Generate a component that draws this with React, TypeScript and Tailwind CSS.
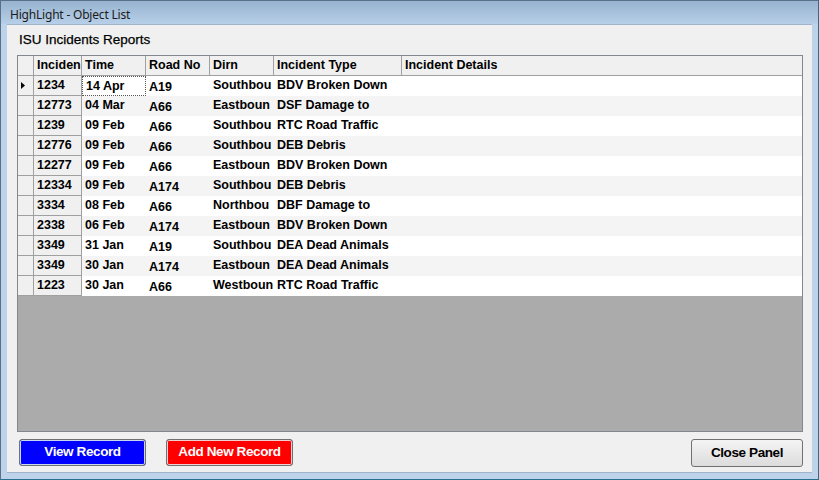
type Row = {
  id: string;
  time: string;
  road: string;
  dirn: string;
  type: string;
};

// column text as the grid shows it (narrow columns clip the longer values)
const ROWS: Row[] = [
  { id: "1234", time: "14 Apr", road: "A19", dirn: "Southbou", type: "BDV Broken Down" },
  { id: "12773", time: "04 Mar", road: "A66", dirn: "Eastboun", type: "DSF Damage to" },
  { id: "1239", time: "09 Feb", road: "A66", dirn: "Southbou", type: "RTC Road Traffic" },
  { id: "12776", time: "09 Feb", road: "A66", dirn: "Southbou", type: "DEB Debris" },
  { id: "12277", time: "09 Feb", road: "A66", dirn: "Eastboun", type: "BDV Broken Down" },
  { id: "12334", time: "09 Feb", road: "A174", dirn: "Southbou", type: "DEB Debris" },
  { id: "3334", time: "08 Feb", road: "A66", dirn: "Northbou", type: "DBF Damage to" },
  { id: "2338", time: "06 Feb", road: "A174", dirn: "Eastboun", type: "BDV Broken Down" },
  { id: "3349", time: "31 Jan", road: "A19", dirn: "Southbou", type: "DEA Dead Animals" },
  { id: "3349", time: "30 Jan", road: "A174", dirn: "Eastboun", type: "DEA Dead Animals" },
  { id: "1223", time: "30 Jan", road: "A66", dirn: "Westboun", type: "RTC Road Traffic" },
];

const cell = "shrink-0 overflow-hidden whitespace-nowrap pl-[3px] leading-[19px]";

function HeaderRow() {
  return (
    <div className="flex h-[20px] bg-[#f0f0f0] border-b border-[#a0a0a0]">
      <div className="w-[16px] shrink-0 border-r border-[#a0a0a0]" />
      <div className={`${cell} w-[48px] border-r border-[#a0a0a0]`}>Inciden</div>
      <div className={`${cell} w-[64px] border-r border-[#a0a0a0]`}>Time</div>
      <div className={`${cell} w-[64px] border-r border-[#a0a0a0]`}>Road No</div>
      <div className={`${cell} w-[64px] border-r border-[#a0a0a0]`}>Dirn</div>
      <div className={`${cell} w-[128px] border-r border-[#a0a0a0]`}>Incident Type</div>
      <div className={`${cell} flex-1`}>Incident Details</div>
    </div>
  );
}

function DataRow({ row, index }: { row: Row; index: number }) {
  const bg = index % 2 === 0 ? "bg-white" : "bg-[#f4f4f4]";
  return (
    <div className={`flex h-[20px] ${bg}`}>
      <div className="w-[16px] shrink-0 bg-[#f0f0f0] border-r border-b border-[#a0a0a0] flex items-center pl-[3px]">
        {index === 0 && (
          <svg width="4" height="7" viewBox="0 0 4 7">
            <path d="M0 0 L4 3.5 L0 7 Z" fill="#000" />
          </svg>
        )}
      </div>
      <div className={`${cell} w-[48px] bg-[#f0f0f0] border-r border-b border-[#a0a0a0]`}>{row.id}</div>
      <div
        className={`${cell} w-[64px] ${
          index === 0 ? "border border-dotted border-[#555] pl-[2px] leading-[17px]" : ""
        }`}
      >
        {row.time}
      </div>
      <div className={`${cell} w-[64px] pt-[2px]`}>{row.road}</div>
      <div className={`${cell} w-[64px]`}>{row.dirn}</div>
      <div className={`${cell} w-[128px]`}>{row.type}</div>
      <div className={`${cell} flex-1`} />
    </div>
  );
}

export default function App() {
  return (
    <div className="w-[819px] h-[480px] flex flex-col overflow-hidden bg-[#bcd3ea] border border-[#5a7088] border-r-[#2a6f92] border-b-[#2a6f92] font-['Liberation_Sans',Arial,sans-serif] text-black">
      {/* title bar */}
      <div className="h-[23px] shrink-0 bg-gradient-to-b from-[#97b3cf] to-[#b7cfe8] flex items-center pl-[9px] pt-[4px]">
        <span className="text-[12px] text-[#1b1b1b] font-['Noto_Sans',sans-serif] tracking-[-0.2px]">
          HighLight - Object List
        </span>
      </div>

      <div className="flex flex-1 min-h-0 px-[6px] pb-[6px]">
        <div className="flex-1 bg-[#f0f0f0] flex flex-col pl-[10px] pr-[9px] border-t border-b border-[#9fb4ca]">
          <div className="h-[30px] shrink-0 flex items-center pl-[2px] pt-[1px] text-[13.5px] [-webkit-text-stroke:0.25px_black]">
            ISU Incidents Reports
          </div>

          {/* grid */}
          <div className="h-[377px] shrink-0 border border-[#828790] bg-[#ababab] flex flex-col text-[12.5px] font-bold">
            <HeaderRow />
            {ROWS.map((row, i) => (
              <DataRow key={i} row={row} index={i} />
            ))}
          </div>

          {/* buttons */}
          <div className="flex items-start pt-[7px]">
            <button className="ml-[2px] w-[127px] h-[27px] rounded-[3px] border border-[#707070] bg-[#0000ff] shadow-[inset_0_0_0_1px_#c8d8f0] text-white text-[13.5px] font-bold tracking-[-0.4px]">
              View Record
            </button>
            <button className="ml-[20px] w-[127px] h-[27px] rounded-[3px] border border-[#707070] bg-[#ff0000] shadow-[inset_0_0_0_1px_#f0d0d0] text-white text-[13.5px] font-bold tracking-[-0.4px]">
              Add New Record
            </button>
            <button className="ml-auto w-[112px] h-[28px] rounded-[3px] border border-[#707070] bg-gradient-to-b from-[#f4f4f4] to-[#dcdcdc] text-black text-[13.5px] font-bold tracking-[-0.4px]">
              Close Panel
            </button>
          </div>
        </div>
      </div>
    </div>
  );
}
